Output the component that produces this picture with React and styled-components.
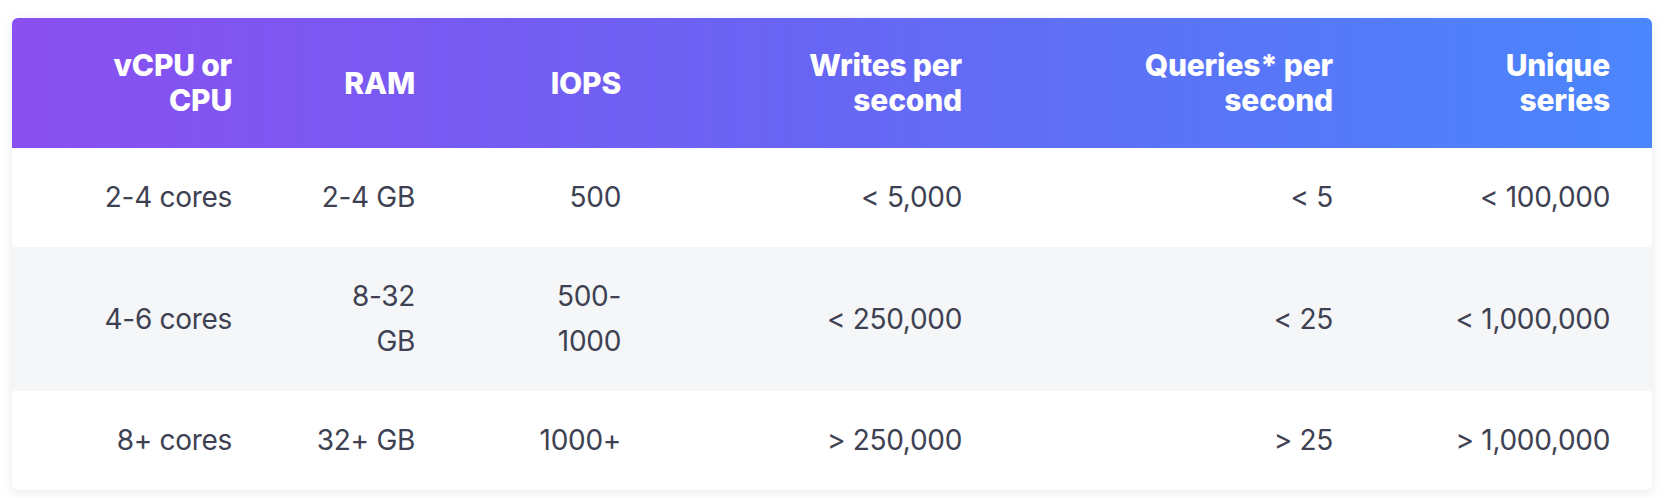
import styled, { createGlobalStyle } from 'styled-components';

const GlobalStyle = createGlobalStyle`
  html, body {
    margin: 0;
    background: #ffffff;
  }
  body {
    padding: 18px 13px 9px 12px;
    font-family: Inter, "Noto Sans", "Liberation Sans", sans-serif;
  }
`;

const Card = styled.div`
  border-radius: 6px;
  overflow: hidden;
  background: #ffffff;
  box-shadow: 0 2px 12px rgba(30, 40, 80, 0.1);
`;

const Table = styled.table`
  width: 100%;
  border-collapse: collapse;
  table-layout: fixed;
  font-size: 28px;
`;

const HeadRow = styled.tr`
  background: linear-gradient(90deg, #8a4ff0 0%, #6a63f3 45%, #4a86fc 100%);
`;

const Th = styled.th`
  height: 130px;
  padding: 0 42px;
  text-align: right;
  vertical-align: middle;
  color: #ffffff;
  font-size: 30px;
  font-weight: 800;
  line-height: 35px;
  letter-spacing: -0.2px;
`;

const Row = styled.tr`
  background: ${(p) => (p.$striped ? '#f5f6f8' : '#ffffff')};
`;

const Td = styled.td`
  padding: 27px 42px;
  text-align: right;
  vertical-align: middle;
  color: #3e4152;
  font-weight: 400;
  line-height: 45px;
  letter-spacing: -0.3px;
`;

const widths = [262, 183, 206, 341, 371, 277];

const headers = [
  'vCPU or CPU',
  'RAM',
  'IOPS',
  'Writes per second',
  'Queries* per second',
  'Unique series',
];

const rows = [
  ['2-4 cores', '2-4 GB', '500', '< 5,000', '< 5', '< 100,000'],
  ['4-6 cores', '8-32 GB', '500-1000', '< 250,000', '< 25', '< 1,000,000'],
  ['8+ cores', '32+ GB', '1000+', '> 250,000', '> 25', '> 1,000,000'],
];

export default function App() {
  return (
    <>
      <GlobalStyle />
      <Card>
        <Table>
          <colgroup>
            {widths.map((w, i) => (
              <col key={i} style={{ width: w }} />
            ))}
          </colgroup>
          <thead>
            <HeadRow>
              {headers.map((h) => (
                <Th key={h}>{h}</Th>
              ))}
            </HeadRow>
          </thead>
          <tbody>
            {rows.map((r, i) => (
              <Row key={i} $striped={i % 2 === 1}>
                {r.map((c, j) => (
                  <Td key={j}>{c}</Td>
                ))}
              </Row>
            ))}
          </tbody>
        </Table>
      </Card>
    </>
  );
}
